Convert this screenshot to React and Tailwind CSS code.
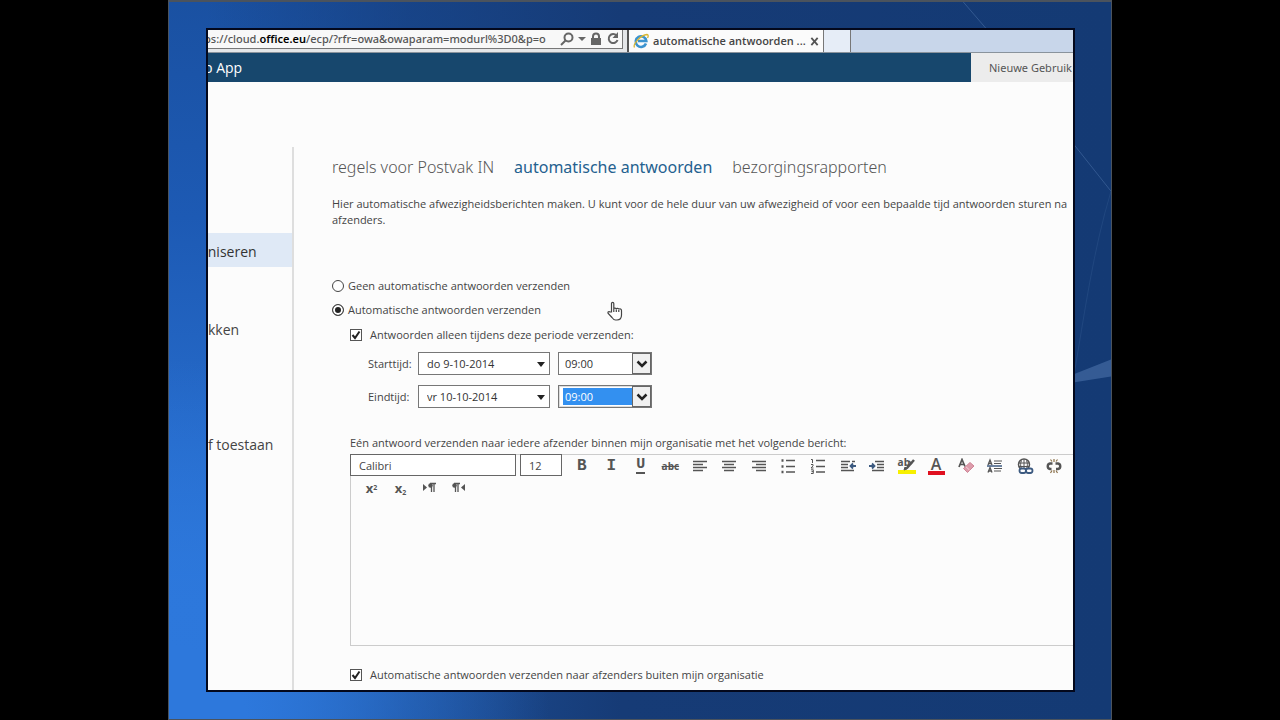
import { useState } from "react";

const tabs = ["regels voor Postvak IN", "automatische antwoorden", "bezorgingsrapporten"];

const Svg = ({ children, className = "w-[18px] h-[16px]" }) => (
  <svg viewBox="0 0 18 16" fill="none" stroke="#555" strokeWidth="1.5" className={className}>
    {children}
  </svg>
);

const tools = [
  { name: "Vet", icon: <span className="font-['Liberation_Mono'] text-[16px] font-bold">B</span> },
  { name: "Cursief", icon: <span className="font-['Liberation_Mono'] text-[16px] font-bold">I</span> },
  {
    name: "Onderstrepen",
    icon: <span className="border-b-2 border-[#555] font-['Liberation_Mono'] text-[15px] leading-[14px] font-bold">U</span>,
  },
  { name: "Doorhalen", icon: <span className="text-[10px] font-bold line-through">abc</span> },
  { name: "Links uitlijnen", icon: <Svg><path d="M2 3.5h14M2 6.5h10M2 9.5h14M2 12.5h10" /></Svg> },
  { name: "Centreren", icon: <Svg><path d="M2 3.5h14M4 6.5h10M2 9.5h14M4 12.5h10" /></Svg> },
  { name: "Rechts uitlijnen", icon: <Svg><path d="M2 3.5h14M6 6.5h10M2 9.5h14M6 12.5h10" /></Svg> },
  {
    name: "Opsommingstekens",
    icon: <Svg><path d="M7 2.5h9M7 8.5h9M7 14h9" /><path d="M2.5 2.5h2M2.5 8.5h2M2.5 14h2" strokeWidth="2.4" /></Svg>,
  },
  {
    name: "Nummering",
    icon: (
      <Svg>
        <path d="M7 2.5h9M7 8.5h9M7 14h9" />
        <path d="M2 1.5h1.5V5M2 6.5h2v1.4L2 10h2.5M2 11.8h2.3v3.7H2M2.5 13.6h1.8" strokeWidth="1" />
      </Svg>
    ),
  },
  {
    name: "Inspringing verkleinen",
    icon: (
      <Svg>
        <path d="M2 3.5h9M2 6.5h7M2 9.5h7M2 12.5h13M13 3.5h3" />
        <path d="M17 8h-5M14 5.5L11.5 8l2.5 2.5" stroke="#3c5a80" strokeWidth="1.8" />
      </Svg>
    ),
  },
  {
    name: "Inspringing vergroten",
    icon: (
      <Svg>
        <path d="M7 3.5h9M9 6.5h7M9 9.5h7M4 12.5h12" />
        <path d="M1 8h5M4 5.5L6.5 8 4 10.5" stroke="#3c5a80" strokeWidth="1.8" />
      </Svg>
    ),
  },
  {
    name: "Markeren",
    icon: (
      <span className="relative flex h-4 w-[18px] items-start border-b-4 border-[#f7f000] text-[10px] leading-[9px] font-bold">
        ab
        <svg viewBox="0 0 18 16" className="absolute inset-0 h-4 w-[18px]" fill="none" stroke="#555">
          <path d="M16 2L8.5 10.5" strokeWidth="2.5" />
          <path d="M11 3l3 3" strokeWidth="1.5" />
          <path d="M6 12l1-3 2 2z" fill="#555" />
        </svg>
      </span>
    ),
  },
  {
    name: "Tekstkleur",
    icon: <span className="w-[17px] border-b-4 border-[#e01020] text-center text-[16px] leading-[13px] font-semibold">A</span>,
  },
  {
    name: "Opmaak wissen",
    icon: (
      <Svg>
        <path d="M2 9L5 1.5 8 8.500M3 6.500h4" strokeWidth="1.7" />
        <path d="M6.500 10.500l6.500-6 4 3.500-6.500 6.500z" fill="#dd9cab" stroke="#cf8496" strokeWidth="1" />
        <path d="M9 8.800l3.500 3.200" stroke="#f4d3da" strokeWidth="1" />
      </Svg>
    ),
  },
  {
    name: "Regelafstand",
    icon: (
      <Svg>
        <path d="M2 7l2-5 2 5M2.700 5.500h2.600M2 14.500l2-5 2 5M2.700 13h2.600" strokeWidth="1.3" />
        <path d="M1 8h15" stroke="#3c5a80" />
        <path d="M8 3h8M8 5.500h7M8 10.500h8M8 13h7" strokeWidth="1" />
      </Svg>
    ),
  },
  {
    name: "Koppeling invoegen",
    icon: (
      <Svg>
        <circle cx="8" cy="6.500" r="5.500" strokeWidth="1.5" />
        <path d="M3 5h10M3 8.500h10M8 1.300v10.400M5.500 2.500c-1.200 3-1.200 5.500 0 8M10.500 2.500c1.200 3 1.200 5.500 0 8" strokeWidth="1" />
        <rect x="3.500" y="10.500" width="6.500" height="4.500" rx="2.200" fill="#fcfcfc" stroke="#3c5a80" strokeWidth="1.8" />
        <rect x="10" y="10.500" width="6.500" height="4.500" rx="2.200" fill="#fcfcfc" stroke="#3c5a80" strokeWidth="1.8" />
      </Svg>
    ),
  },
  {
    name: "Koppeling verwijderen",
    icon: (
      <Svg>
        <path d="M7.500 5.500H5a2.800 2.800 0 000 5.500h1.500M10.500 5.500H13a2.800 2.800 0 010 5.500h-2" strokeWidth="2.4" />
        <path d="M9 1v3M5.500 1.500l1.500 2M12.500 1.500l-1.500 2M9 12v3M5.500 15l1.500-2.500M12.500 15L11 12.500" stroke="#8a7048" strokeWidth="1.2" />
      </Svg>
    ),
  },
];

const extraTools = [
  { name: "Superscript", icon: <span className="text-[13px] font-bold">x<sup className="text-[7px]">2</sup></span> },
  { name: "Subscript", icon: <span className="text-[13px] font-bold">x<sub className="text-[7px]">2</sub></span> },
  {
    name: "Links naar rechts",
    icon: (
      <Svg>
        <path d="M2 4v7l4-3.500z" fill="#555" stroke="none" />
        <path d="M9 3.500h6M10.500 4v8M13 4v8" strokeWidth="1.3" />
        <circle cx="9.500" cy="5.500" r="2.200" fill="#555" stroke="none" />
      </Svg>
    ),
  },
  {
    name: "Rechts naar links",
    icon: (
      <Svg>
        <path d="M15 4v7l-4-3.500z" fill="#555" stroke="none" />
        <path d="M4 3.500h6M5.500 4v8M8 4v8" strokeWidth="1.3" />
        <circle cx="4.500" cy="5.500" r="2.200" fill="#555" stroke="none" />
      </Svg>
    ),
  },
];

function ToolButton({ tool, className }) {
  return (
    <button type="button" aria-label={tool.name} className={`flex h-[22px] items-center justify-center text-[#555] ${className}`}>
      {tool.icon}
    </button>
  );
}

function Radio({ label, checked, onChange }) {
  return (
    <label className="flex h-6 items-center gap-1">
      <input
        type="radio"
        name="mode"
        checked={checked}
        onChange={onChange}
        className="size-3 appearance-none rounded-full border border-[#444] bg-white checked:bg-[#222] checked:shadow-[inset_0_0_0_2px_white]"
      />
      {label}
    </label>
  );
}

function Checkbox({ label }) {
  return (
    <label className="flex h-[26px] items-center gap-2">
      <span className="grid size-3 place-items-center">
        <input type="checkbox" defaultChecked className="peer col-start-1 row-start-1 size-3 appearance-none border border-[#555] bg-white" />
        <svg viewBox="0 0 12 12" className="pointer-events-none invisible col-start-1 row-start-1 size-3 peer-checked:visible" fill="none" stroke="#222" strokeWidth="2">
          <path d="M2.500 6l2.500 3L9.500 2.500" />
        </svg>
      </span>
      {label}
    </label>
  );
}

function PeriodRow({ label, date, time, selected }) {
  return (
    <div className="flex h-[23px] items-center gap-2">
      <label htmlFor={label} className="w-[42px] whitespace-nowrap">{label}:</label>
      <div className="relative h-full w-[132px] border border-[#777] bg-white">
        <select id={label} className="h-full w-full appearance-none pl-2 text-[11px] text-[#333]">
          <option>{date}</option>
        </select>
        <svg viewBox="0 0 8 5" className="pointer-events-none absolute top-[9px] right-[4px] h-[5px] w-2">
          <path d="M0 0h8L4 5z" fill="#222" />
        </svg>
      </div>
      <div className={`flex h-full w-[94px] border border-[#777] bg-white ${selected ? "ring-1 ring-[#ddd] ring-inset" : ""}`}>
        <select
          aria-label={`${label} uur`}
          className={`my-[2px] ml-1 min-w-0 flex-1 appearance-none pl-[2px] text-[11px] ${selected ? "bg-[#3390f0] text-white" : "text-[#333]"}`}
        >
          <option>{time}</option>
        </select>
        <span className="pointer-events-none flex w-[19px] items-center justify-center border border-[#666] bg-[#f0f0f0]">
          <svg viewBox="0 0 12 8" className="h-2 w-3" fill="none" stroke="#222" strokeWidth="2.5">
            <path d="M1.500 1.500L6 6l4.500-4.500" />
          </svg>
        </span>
      </div>
    </div>
  );
}

function BrowserBar() {
  return (
    <div className="flex h-[23px] shrink-0 border-b border-[#8a939c] bg-[#c8d6ea]">
      <div className="flex w-[421px] shrink-0 border-r-2 border-[#555] bg-[#e4e6e8] pr-1 pb-[3px]">
        <div className="flex min-w-0 flex-1 items-center border-r border-b border-[#777] bg-[#f8f8f8] pr-[2px] text-[#555]">
          <span className="-ml-1 flex-1 font-['Noto_Sans',sans-serif] text-[11px] leading-4 font-medium whitespace-nowrap">
            ps://cloud.<b className="font-semibold text-black">office.eu</b>/ecp/?rfr=owa&amp;owaparam=modurl%3D0&amp;p=o
          </span>
          <span className="flex shrink-0 items-center gap-1">
            <svg viewBox="0 0 14 14" className="size-[14px]" fill="none" stroke="#666" strokeWidth="2">
              <circle cx="8.500" cy="5.500" r="4" /><path d="M5.500 8.500L1 13" />
            </svg>
            <svg viewBox="0 0 8 4" className="h-1 w-2"><path d="M0 0h8L4 4z" fill="#666" /></svg>
            <svg viewBox="0 0 12 14" className="h-[14px] w-3">
              <path d="M3 7V4.500a3 3 0 016 0V7" fill="none" stroke="#666" strokeWidth="2" />
              <rect x="1" y="6" width="10" height="7" fill="#666" />
            </svg>
            <svg viewBox="0 0 14 14" className="size-[14px]" fill="none" stroke="#666" strokeWidth="2">
              <path d="M10.500 3.500A4.500 4.500 0 1011.500 8" /><path d="M12 0v6H6.500z" fill="#666" stroke="none" />
            </svg>
          </span>
        </div>
      </div>
      <div className="flex w-[195px] shrink-0 items-center gap-1 border-r border-[#777] bg-[#fbfbfb] pr-[6px] pl-1 text-[11px] font-semibold text-[#444]">
        <svg viewBox="0 0 16 16" className="size-4 shrink-0" fill="none">
          <path d="M13 10.500A5.300 5.300 0 1113.300 8H5" stroke="#3b93cf" strokeWidth="2.6" />
          <path d="M1.500 14.500C-.5 11 8 2 14 1.500c1.500 0 1.500 2 .5 3.500" stroke="#d9b530" strokeWidth="1.3" />
        </svg>
        <span className="flex-1 whitespace-nowrap">automatische antwoorden ...</span>
        <button type="button" aria-label="Tabblad sluiten" className="shrink-0">
          <svg viewBox="0 0 10 10" className="size-[9px]" stroke="#555" strokeWidth="2"><path d="M1.500 1l7 8M8.500 1l-7 8" /></svg>
        </button>
      </div>
      <button type="button" aria-label="Nieuw tabblad" className="w-[27px] border-r border-[#777] bg-[#e6edf7]" />
    </div>
  );
}

export default function App() {
  const [auto, setAuto] = useState(true);

  return (
    <div className="min-h-screen bg-black px-[168px] font-['Open_Sans','Noto_Sans',sans-serif]">
      <div className="relative flex h-screen border border-t-2 border-[#4b535d] bg-[radial-gradient(ellipse_380px_360px_at_0_100%,#2d78dc_20%,transparent),linear-gradient(to_right,transparent_4%,#163b7699_25%,#163b76_48%,#143a74),linear-gradient(to_bottom,#1a51a2,#1d5ab4_30%,#2d78dc_85%,#2768c2)] pt-[26px] pr-[36px] pb-[27px] pl-[37px]">
        <svg viewBox="0 0 944 720" preserveAspectRatio="none" className="absolute inset-0 h-full w-full" fill="none" stroke="#6a91c4">
          <path d="M796 0l24 28M906 142l38 48" strokeOpacity=".35" />
          <path d="M906 374l38-15v17l-38 6z" fill="#5e86bd" fillOpacity=".45" stroke="none" />
          <path d="M944 190c-18 60-26 120-38 190" strokeOpacity=".15" />
        </svg>

        <div className="relative flex min-w-0 flex-1 flex-col overflow-hidden border-2 border-[#03081c] bg-[#fcfcfc] text-[11px] leading-4 text-[#444]">
          <BrowserBar />

          <header className="flex h-[29px] shrink-0 items-center justify-between bg-[#17476d]">
            <span className="-ml-1 text-[14px] text-white">b App</span>
            <button type="button" className="h-full w-[102px] overflow-hidden bg-[#ececec] pl-[18px] text-left font-['Noto_Sans',sans-serif] text-[11px] whitespace-nowrap text-[#555]">
              Nieuwe Gebruik
            </button>
          </header>

          <div className="flex min-h-0 flex-1 pt-[65px]">
            <nav className="flex w-[86px] shrink-0 flex-col border-r-2 border-[#dedede] pt-[86px] text-[14px] whitespace-nowrap">
              <a href="#organiseren" className="flex h-[34px] items-center bg-[#dfe9f6] pt-1 text-[#333]">
                <span className="-ml-2">aniseren</span>
              </a>
              <a href="#afdrukken" className="mt-[46px] flex h-[34px] items-center">kken</a>
              <a href="#toestaan" className="mt-[81px] flex h-[34px] items-center">f toestaan</a>
            </nav>

            <main className="min-w-0 flex-1 pt-2 pl-[38px]">
              <div className="flex gap-5 font-['Noto_Sans',sans-serif] text-[16px] leading-6 whitespace-nowrap text-[#555]">
                {tabs.map((t, i) => (
                  <a key={t} href={`#tab-${i}`} className={i === 1 ? "text-[#24618f]" : "font-light"}>{t}</a>
                ))}
              </div>
              <p className="mt-[17px] whitespace-nowrap">
                Hier automatische afwezigheidsberichten maken. U kunt voor de hele duur van uw afwezigheid of voor een bepaalde tijd antwoorden sturen na
                <br />
                afzenders.
              </p>

              <div className="mt-[46px]">
                <Radio label="Geen automatische antwoorden verzenden" checked={!auto} onChange={() => setAuto(false)} />
                <Radio label="Automatische antwoorden verzenden" checked={auto} onChange={() => setAuto(true)} />
              </div>

              <div className="pl-[18px]">
                <Checkbox label="Antwoorden alleen tijdens deze periode verzenden:" />
                <div className="mt-1 flex flex-col gap-[10px] pl-[18px]">
                  <PeriodRow label="Starttijd" date="do 9-10-2014" time="09:00" />
                  <PeriodRow label="Eindtijd" date="vr 10-10-2014" time="09:00" selected />
                </div>

                <label htmlFor="message" className="mt-[27px] block whitespace-nowrap">
                  Eén antwoord verzenden naar iedere afzender binnen mijn organisatie met het volgende bericht:
                </label>
                <div className="mt-[3px] flex h-[192px] flex-col border border-r-0 border-[#ccc]">
                  <div className="flex">
                    <input aria-label="Lettertype" defaultValue="Calibri" className="-mt-px -ml-px h-[22px] w-[166px] border border-[#666] bg-white px-2" />
                    <input aria-label="Tekengrootte" defaultValue="12" className="-mt-px ml-1 h-[22px] w-[42px] border border-[#666] bg-white px-2" />
                    <div className="mr-1 ml-[5px] flex flex-1">
                      {tools.map((t) => <ToolButton key={t.name} tool={t} className="flex-1 basis-0" />)}
                    </div>
                  </div>
                  <div className="flex pl-[6px]">
                    {extraTools.map((t) => <ToolButton key={t.name} tool={t} className="w-[29px]" />)}
                  </div>
                  <textarea id="message" className="w-full flex-1 resize-none outline-none" />
                </div>
                <div className="mt-4">
                  <Checkbox label="Automatische antwoorden verzenden naar afzenders buiten mijn organisatie" />
                </div>
              </div>
            </main>
          </div>

          {/* Hand cursor */}
          <svg viewBox="0 0 16 20" className="pointer-events-none absolute top-[271px] left-[399px] h-5 w-4" fill="#fff" stroke="#444" strokeWidth="1.2">
            <path d="M4.500 11V2.500c0-1.500 2.300-1.500 2.300 0V8c0-1.300 2.500-1.300 2.500.2 0-1.200 2.500-1.200 2.500.4 0-1.100 2.700-1 2.700.8V14c0 3-1.500 5-4.500 5H8.500c-1.500 0-2.500-1-3.500-2.500L1.200 12.500c-.8-1.500.8-2.500 1.800-1.500z" />
            <path d="M6.800 8v3M9.300 8.500V11M11.800 9v2" />
          </svg>
        </div>
      </div>
    </div>
  );
}
